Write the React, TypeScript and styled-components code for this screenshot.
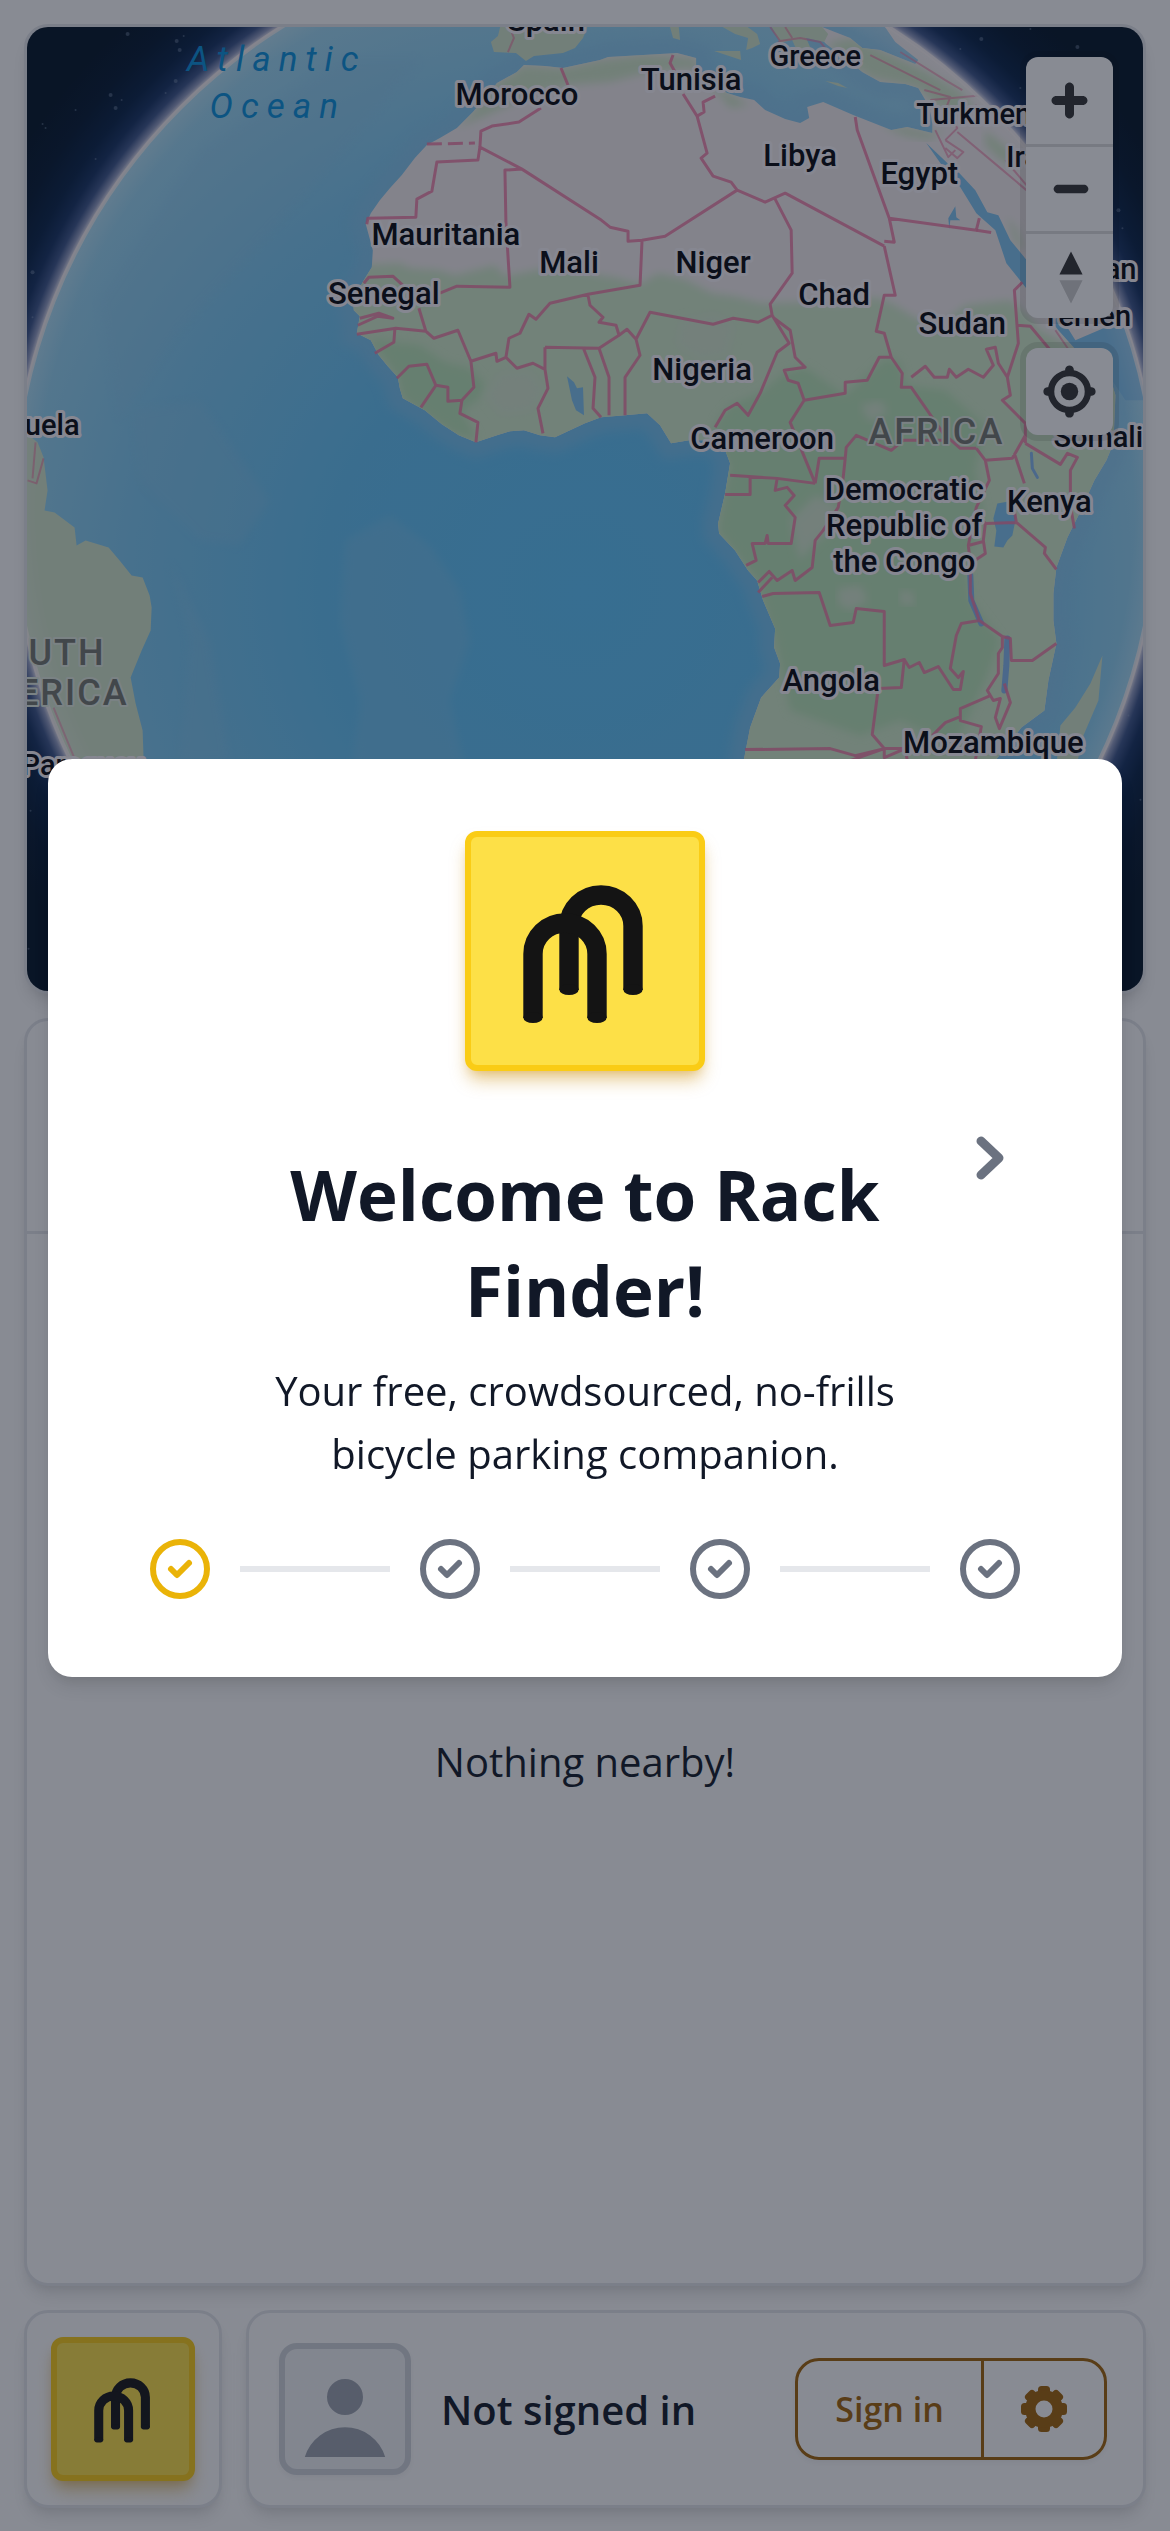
import React from "react";
import styled, { createGlobalStyle, css } from "styled-components";

const GlobalStyle = createGlobalStyle`
  *, *::before, *::after { box-sizing: border-box; }
  body {
    margin: 0;
    background: #ffffff;
    color: #111827;
    font-family: "Segoe UI", "Open Sans", "Noto Sans", sans-serif;
    font-size: 40px;
    line-height: 63px;
  }
  button { font: inherit; color: inherit; cursor: pointer; }
  h1, p { margin: 0; }
`;

const shadowMd = "0 12px 18px -3px rgba(0, 0, 0, 0.1), 0 6px 12px -6px rgba(0, 0, 0, 0.1)";

const Page = styled.div`
  display: grid;
  grid-template-rows: minmax(0, 13fr) minmax(0, 17fr) auto;
  gap: 24px;
  height: 100vh;
  padding: 24px 24px 23px;
`;

const cardStyles = css`
  border: 3px solid #e5e7eb;
  border-radius: 24px;
  background: #ffffff;
  box-shadow: ${shadowMd};
`;

const MapCard = styled.section`
  ${cardStyles}
  position: relative;
  overflow: hidden;
`;

const MapCanvas = styled.svg`
  position: absolute;
  inset: 0;
  width: 100%;
  height: 100%;
`;

const MapControls = styled.div`
  position: absolute;
  top: 30px;
  right: 30px;
  display: flex;
  flex-direction: column;
  gap: 30px;
`;

const ControlGroup = styled.div`
  display: flex;
  flex-direction: column;
  overflow: hidden;
  border-radius: 12px;
  background: #ffffff;
  box-shadow: 0 0 0 6px rgba(0, 0, 0, 0.1);
`;

const ControlButton = styled.button`
  display: flex;
  align-items: center;
  justify-content: flex-end;
  width: 87px;
  height: 87px;
  padding: 0;
  border: 0;
  background: transparent;
  & + & { border-top: 3px solid #dddddd; }
  svg { display: block; height: 100%; }
`;

const ListCard = styled.section`
  ${cardStyles}
  display: flex;
  flex-direction: column;
`;

const ListHeader = styled.header`
  flex: none;
  height: 213px;
  border-bottom: 3px solid #e5e7eb;
`;

const ListBody = styled.div`
  flex: 1;
  display: flex;
  align-items: center;
  justify-content: center;
  padding-top: 6px;
`;

const Footer = styled.footer`
  display: flex;
  gap: 24px;
`;

const LogoCard = styled.div`
  ${cardStyles}
  padding: 24px;
`;

const LogoTile = styled.div<{ $size: number }>`
  flex: none;
  width: ${(p) => p.$size}px;
  height: ${(p) => p.$size}px;
  padding: 24px;
  border: 6px solid #facc15;
  border-radius: 12px;
  background: #fde047;
  box-shadow: 0 12px 18px -3px rgba(202, 138, 4, 0.4), 0 6px 12px -6px rgba(202, 138, 4, 0.4);
  svg { display: block; width: 100%; height: 100%; }
`;

const AccountCard = styled.div`
  ${cardStyles}
  flex: 1;
  display: flex;
  align-items: center;
  gap: 30px;
  padding: 0 36px 0 30px;
`;

const Avatar = styled.div`
  width: 132px;
  height: 132px;
  border: 6px solid #d1d5db;
  border-radius: 18px;
  background: #f3f4f6;
  box-shadow: 0 3px 6px rgba(0, 0, 0, 0.05);
  svg { display: block; width: 100%; height: 100%; }
`;

const AccountName = styled.p`
  flex: 1;
  font-weight: 600;
`;

const ButtonGroup = styled.div`
  display: flex;
  height: 102px;
  border: 3px solid #a16207;
  border-radius: 24px;
  color: #a16207;
  font-size: 34px;
  font-weight: 600;
  box-shadow: 0 3px 6px rgba(0, 0, 0, 0.05);
`;

const GroupButton = styled.button<{ $width: number }>`
  display: flex;
  align-items: center;
  justify-content: center;
  width: ${(p) => p.$width}px;
  padding: 0;
  border: 0;
  background: transparent;
  & + & { border-left: 3px solid #a16207; }
`;

const Backdrop = styled.div`
  position: fixed;
  inset: 0;
  display: flex;
  align-items: center;
  padding: 0 48px 95px;
  background: rgba(17, 24, 39, 0.5);
`;

const Dialog = styled.div`
  flex: 1;
  display: flex;
  flex-direction: column;
  gap: 48px;
  padding: 72px;
  border-radius: 24px;
  background: #ffffff;
  box-shadow: ${shadowMd};
`;

const Slide = styled.div`
  display: grid;
  grid-template-columns: 120px 1fr 120px;
`;

const SlideContent = styled.div`
  grid-column: 2;
  display: flex;
  flex-direction: column;
  align-items: center;
  text-align: center;
`;

const Title = styled.h1`
  margin: 75px 0 21px;
  font-size: 69px;
  font-weight: 700;
  line-height: 96px;
`;

const NextButton = styled.button`
  display: flex;
  align-items: center;
  justify-content: center;
  padding: 0;
  border: 0;
  background: transparent;
  color: #6b7280;
`;

const Stepper = styled.ol`
  display: flex;
  align-items: center;
  gap: 24px;
  margin: 0;
  padding: 0 24px;
  list-style: none;
`;

const Step = styled.li<{ $active: boolean }>`
  flex: none;
  height: 72px;
  color: ${(p) => (p.$active ? "#eab308" : "#6b7280")};
  svg { display: block; }
`;

const StepLine = styled.li`
  flex: 1;
  height: 6px;
  background: #e5e7eb;
`;

/* Two overlapping bicycle hoops */
const Hoop = ({ left, right, shoulder, foot }: { left: number; right: number; shoulder: number; foot: number }) => (
  <>
    <path
      d={`M${left} ${foot - 5}V${shoulder}A32 31 0 0 1 ${right} ${shoulder}V${foot - 5}`}
      fill="none"
      stroke="#141414"
      strokeWidth="19.4"
    />
    <ellipse cx={left} cy={foot - 5.5} rx="9.7" ry="5.5" fill="#141414" />
    <ellipse cx={right} cy={foot - 5.5} rx="9.7" ry="5.5" fill="#141414" />
  </>
);

const Logo = ({ size }: { size: number }) => (
  <LogoTile $size={size}>
    <svg viewBox="0 0 180 180" role="img" aria-label="Rack Finder">
      <Hoop left={74} right={138} shoulder={65} foot={134} />
      <Hoop left={38} right={102} shoulder={93} foot={162} />
    </svg>
  </LogoTile>
);

const Gear = () => (
  <svg width="48" height="48" viewBox="-24 -24 48 48" aria-hidden="true">
    <g fill="currentColor">
      {[0, 45, 90, 135].map((a) => (
        <rect key={a} x="-6" y="-23" width="12" height="46" rx="3.5" transform={`rotate(${a})`} />
      ))}
      <circle r="19" />
    </g>
    <circle r="8.5" fill="#ffffff" />
  </svg>
);

const StepIcon = () => (
  <svg width="72" height="72" viewBox="0 0 24 24" fill="none" stroke="currentColor" strokeWidth="2" strokeLinecap="round" strokeLinejoin="round" aria-hidden="true">
    <path d="M9 12l2 2 4-4m6 2a9 9 0 11-18 0 9 9 0 0118 0z" />
  </svg>
);

const AFRICA_ASIA =
  "M524 65L517 72L497 83L485 98L473 112L457 128L440 138L427 145L415 158L402 175L390 188L380 200L371 213L366 224L373 250L372 267L364 280L353 300L354 310L360 316L357 333L371 340L379 355L388 366L398 377L400 388L403 398L425 410L442 424L459 435L476 442L497 435L510 431L524 430L540 435L555 437L570 430L585 423L601 417L625 415L647 413L660 425L671 443L689 440L712 440L724 447L730 463L725 493L718 523L719 533L735 550L748 570L757 580L763 600L775 628L774 647L780 663L779 677L761 697L750 727L744 758L744 800L985 800L995 760L1021 727L1044 710L1048 680L1056 643L1053 620L1053 593L1056 567L1067 537L1079 513L1094 480L1106 460L1113 443L1115 395L1110 378L1088 352L1075 348L1090 345L1110 330L1150 300L1150 20L880 20L895 42L918 60L915 64L880 50L862 48L850 38L822 27L812 30L826 44L850 62L862 72L880 82L905 84L918 88L928 105L932 120L932 133L907 127L891 130L853 115L823 102L807 107L809 118L800 123L785 119L765 110L754 100L740 97L727 93L712 84L696 67L696 58L677 53L643 55L608 57L600 60L563 68L545 66Z";

const SAVANNA =
  "M340 266L400 263L410 268L440 270L455 275L495 265L505 276L555 266L600 275L615 277L640 284L658 273L685 279L712 293L735 296L761 303L800 302L840 304L876 297L895 305L914 317L940 325L965 305L991 302L1010 300L1022 310L1040 330L1070 345L1120 360L1120 480L1040 820L744 820L735 740L700 500L380 460Z";

const FOREST = [
  "M370 339L395 342L420 345L445 362L470 368L486 385L478 400L462 410L478 440L455 434L403 398L398 377Z",
  "M718 420L730 405L760 393L785 372L805 367L845 395L885 358L900 362L905 385L945 390L985 425L975 470L985 520L965 560L970 600L1000 640L985 680L955 745L900 720L860 735L790 710L775 640L757 580L718 530L730 465L712 436Z",
];

const LIGHT_PATCHES = [
  "M680 320L715 312L735 325L728 355L700 360L676 345Z",
  "M500 372L530 370L545 390L530 412L500 415L485 395Z",
  "M838 588L860 585L868 600L850 610L838 603Z",
  "M900 590L912 592L915 605L900 603Z",
  "M860 405L880 400L888 412L870 422Z",
  "M815 495L838 505L830 530L812 545L800 560L790 520Z",
];

const COAST_GREEN = [
  "M524 65L497 83L473 112L457 128L480 118L510 105L540 92L570 85L610 82L650 72L690 68L720 95L730 108L750 105L727 93L696 67L696 58L643 55L600 60L563 68Z",
  "M880 126L907 127L932 133L945 128L930 140L905 136Z",
  "M850 38L880 50L925 70L960 90L975 110L960 115L935 105L918 88L870 78L826 44Z",
  "M985 130L1010 150L1020 168L1000 160L985 145Z",
  "M1006 216L1016 228L1024 250L1016 245Z",
];

const BORDERS =
  "M561 68L568 85M541 108L519 122L492 126L481 131L480 147L478 160L437 162L432 191L417 199L416 217L368 218L367 224" +
  "M480 147L522 169L600 219L610 227L628 231L628 241L642 240L665 236L737 190L765 202L785 193L884 246" +
  "M522 169L505 170L506 223L510 287L457 286L440 293M364 283L369 277L393 276L404 286M419 308L426 331" +
  "M357 334L396 328L426 331L434 338L458 330L471 361L496 353L497 361L506 357L517 368L533 363L545 369" +
  "M360 318L379 313L393 318L378 316L358 325M395 329L394 342L375 353" +
  "M397 378L409 366L427 364L436 385L421 407M436 385L448 387L448 401L462 400L460 413L478 422L476 442M471 361L474 387L462 400" +
  "M506 357L509 338L520 333L529 314L536 319L550 303L588 294L640 285L642 240" +
  "M588 295L590 305L603 317L599 322L616 325L619 335L627 329L636 339L650 312L713 324L733 318L758 322L772 315L770 304L792 273L791 230L775 199" +
  "M545 347L599 348L619 335M545 347L545 369L548 388L538 408L543 433" +
  "M583 347L595 377L593 408L601 417M599 348L609 377L609 415M636 339L640 355L625 377L625 415" +
  "M772 315L789 343L777 352L760 393L748 415L737 403L725 410L715 427M774 318L790 330L795 357L805 367L784 370L788 380L798 383L804 400L790 422L815 483" +
  "M804 400L845 393L845 382L867 380L879 357L891 357L884 333L876 331L884 295L895 295L884 246" +
  "M855 117L857 130L889 218L894 242L884 241M889 218L976 230L979 218" +
  "M673 55L670 63L675 72M683 94L697 116L707 153L701 158L713 176L731 182L737 190M697 116L704 112L703 102L715 96" +
  "M891 357L902 373L901 387L911 387L943 433L960 448L976 448M911 377L925 366L934 377L947 377L949 369L956 377L968 369L983 377L993 365L986 349L995 347L998 363L1007 377L1010 395L1002 400L1025 423L1025 443" +
  "M1007 377L1018 343L1014 290L1022 282M1017 325L1030 326L1050 350" +
  "M815 483L819 458L845 458L846 447L856 435L891 450L903 440L943 440M845 458L843 477L838 507L823 530L815 540L812 567L795 580L792 570L777 580L769 571L758 582" +
  "M730 475L777 478L815 483M750 477L750 494L725 494M777 478L775 490L787 487L794 495L785 505L795 517L791 543L768 543L767 535L765 543L752 543L756 560L746 565M758 592L772 577" +
  "M762 596L773 593L819 592L830 625L853 622L856 608L884 611L884 665L904 659L901 687L878 688L872 734L884 748L905 748" +
  "M745 749L830 748L855 755L884 748L850 760M884 748L884 757L905 748L907 760" +
  "M904 659L909 667L919 662L924 672L938 666L953 689L960 689L963 671L958 677L950 668L956 635L961 623L979 620L1002 636L1010 638L1011 660L1032 660L1056 643" +
  "M979 620L970 593L970 563L985 553L983 540L985 523L982 520M968 545L983 541M970 563L968 545L976 507L989 480L985 460L976 448M985 460L1012 458L1025 435M1014 453L1024 483" +
  "M985 523L1016 522L1045 547L1044 553L1056 569M1016 522L1014 510M1025 443L1060 464L1067 453L1077 457L1070 470L1070 505L1074 528" +
  "M1002 636L1002 647L998 653L998 673L987 690L993 700L1000 698L995 717L999 728L1010 702L1004 683M990 695L960 708L960 720L981 726L975 760M960 716L945 722L932 735";

const FINE_BORDERS =
  "M36 442L33 478M28 480L37 483L44 458M54 707L75 758" +
  "M770 27L780 41L800 38L820 42L825 48M780 41L774 46M785 27L792 38M924 90L950 97L945 110L957 128L945 140M935 130L948 157L955 150M945 140L963 152L957 158L945 148M957 132L1000 168L1026 190M870 55L900 70L940 90M900 52L945 80L962 90M930 100L985 95L1010 130M1005 160L1026 185M975 105L990 120" +
  "M1055 330L1070 352M510 28L514 38L508 52";

type Label = { t: string; x: number; y: number; s?: number; a?: "start" | "middle" | "end" };

const LABELS: Label[] = [
  { t: "Spain", x: 546, y: 31 },
  { t: "Morocco", x: 517, y: 105 },
  { t: "Tunisia", x: 691, y: 90 },
  { t: "Greece", x: 815, y: 66, s: 29 },
  { t: "Turkmenistan", x: 916, y: 124, s: 29, a: "start" },
  { t: "Libya", x: 800, y: 166 },
  { t: "Egypt", x: 919, y: 184 },
  { t: "Iran", x: 1006, y: 167, s: 29, a: "start" },
  { t: "Mauritania", x: 446, y: 245 },
  { t: "Mali", x: 569, y: 273 },
  { t: "Niger", x: 713, y: 273 },
  { t: "Senegal", x: 384, y: 304 },
  { t: "Chad", x: 834, y: 305 },
  { t: "Sudan", x: 962, y: 334 },
  { t: "Oman", x: 1136, y: 279, s: 29, a: "end" },
  { t: "Yemen", x: 1086, y: 326, s: 29 },
  { t: "Nigeria", x: 702, y: 380 },
  { t: "Cameroon", x: 762, y: 449 },
  { t: "Democratic", x: 904, y: 500 },
  { t: "Republic of", x: 904, y: 536 },
  { t: "the Congo", x: 904, y: 572 },
  { t: "Kenya", x: 1049, y: 512 },
  { t: "Somalia", x: 1053, y: 447, s: 29, a: "start" },
  { t: "Angola", x: 831, y: 690 },
  { t: "Mozambique", x: 993, y: 752 },
  { t: "Venezuela", x: 80, y: 435, s: 29, a: "end" },
  { t: "Paraguay", x: 22, y: 774, s: 29, a: "start" },
];

const STARS = [
  [128, 34, 2], [177, 41, 2], [184, 36, 1], [180, 50, 2], [176, 81, 2], [111, 95, 2], [122, 100, 1], [116, 108, 2], [166, 93, 1],
  [76, 110, 1], [43, 124, 1], [46, 128, 1], [96, 159, 1], [33, 272, 2], [33, 317, 1], [981, 39, 2], [1077, 47, 2], [1030, 29, 1],
  [960, 49, 1], [1118, 210, 2], [1122, 228, 1], [1020, 88, 1], [1128, 715, 1], [1140, 799, 1], [31, 810, 1], [29, 948, 1],
];

const GlobeMap = () => (
  <MapCanvas viewBox="27 27 1116 963" preserveAspectRatio="xMidYMid slice" role="img" aria-label="Map centred on Africa">
    <defs>
      <radialGradient id="space" gradientUnits="userSpaceOnUse" cx="585" cy="511" r="700">
        <stop offset="0.817" stopColor="#e6e4ee" />
        <stop offset="0.823" stopColor="#929dc2" />
        <stop offset="0.834" stopColor="#3b5488" />
        <stop offset="0.85" stopColor="#14305f" />
        <stop offset="0.872" stopColor="#062044" />
        <stop offset="0.91" stopColor="#02162f" />
        <stop offset="0.96" stopColor="#011224" />
      </radialGradient>
      <radialGradient id="ocean" gradientUnits="userSpaceOnUse" cx="580" cy="590" r="640">
        <stop offset="0" stopColor="#5cc4fa" />
        <stop offset="0.4" stopColor="#62c3f5" />
        <stop offset="0.7" stopColor="#7ccaf2" />
        <stop offset="1" stopColor="#a3dbf4" />
      </radialGradient>
      <radialGradient id="haze" gradientUnits="userSpaceOnUse" cx="585" cy="511" r="571">
        <stop offset="0.96" stopColor="#ffffff" stopOpacity="0" />
        <stop offset="1" stopColor="#ffffff" stopOpacity="0.2" />
      </radialGradient>
      <clipPath id="globe"><circle cx="585" cy="511" r="571" /></clipPath>
      <clipPath id="land"><path d={AFRICA_ASIA} /></clipPath>
      <filter id="soft"><feGaussianBlur stdDeviation="4" /></filter>
      <filter id="shelf" x="-10%" y="-10%" width="120%" height="120%"><feGaussianBlur stdDeviation="6" /></filter>
    </defs>
    <rect x="-600" y="-600" width="2400" height="2400" fill="url(#space)" />
    {STARS.map(([x, y, r]) => (
      <circle key={`${x}-${y}`} cx={x} cy={y} r={r} fill="#8fa3c0" opacity="0.4" />
    ))}
    <g clipPath="url(#globe)">
      <rect x="0" y="-80" width="1200" height="1200" fill="url(#ocean)" />
      <g filter="url(#soft)" fill="#8cc9ee" opacity="0.3">
        <path d="M345 540L390 515L430 545L460 590L470 640L450 700L470 790L350 790L360 700L340 620Z" />
        <path d="M135 410L200 400L270 500L240 545L200 540L140 480Z" />
        <path d="M100 300L200 150L340 60L420 60L300 200L180 330L120 420Z" />
        <path d="M170 560L190 640L180 760L230 760L210 640Z" />
      </g>
      <path d={AFRICA_ASIA} fill="none" stroke="#8ac6ee" strokeWidth="30" opacity="0.5" filter="url(#shelf)" />
      <path d={AFRICA_ASIA} fill="#f5efef" />
      <g clipPath="url(#land)">
        {COAST_GREEN.map((d) => <path key={d} d={d} fill="#d3e9c9" filter="url(#soft)" />)}
        <path d={SAVANNA} fill="#d2ecca" filter="url(#soft)" />
        {FOREST.map((d) => <path key={d} d={d} fill="#bbe6b8" filter="url(#soft)" />)}
        {LIGHT_PATCHES.map((d) => <path key={d} d={d} fill="#d6e9cf" filter="url(#soft)" />)}
      </g>
      <g fill="#d3e6cb">
        <path d="M502 20L498 36L491 42L494 52L516 53L526 61L534 56L563 53L575 48L583 38L590 20Z" />
        <path d="M668 20L673 38L680 40L678 20ZM710 20L735 34L748 38L746 50L752 48L760 44L757 34L738 20Z" />
        <path d="M714 51L740 51L741 60Z" />
        <path d="M768 20L780 43L792 40L800 58L812 52L806 38L824 42L828 34L816 20Z" />
        <path d="M825 81L838 83L847 88L838 86Z" />
        <path d="M38 442L44 457L48 490L45 510L55 512L75 527L77 545L86 540L109 547L120 560L132 575L143 577L150 595L152 607L151 630L142 650L131 677L136 703L143 730L145 790L10 790L10 420Z" />
        <path d="M1102 655L1098 700L1083 735L1075 770L1056 765L1060 725L1075 707L1090 683Z" />
      </g>
      <g fill="#7fc4f0">
        <path d="M926 143L947 163L958 172L975 190L987 212L998 215L1010 240L1028 262L1050 300L1075 340L1110 325L1150 290L1150 400L1125 400L1105 370L1075 349L1058 330L1022 283L1006 263L995 230L976 213L960 187L940 163Z" />
        <path d="M997 503L1008 501L1016 505L1015 520L1012 535L1007 540L1003 547L994 546L996 530L993 518Z" />
        <path d="M567 376L574 382L577 388L583 387L584 415L576 410L572 400Z" />
        <path d="M955 206L956 217L960 220L950 220L949 229L948 218Z" />
      </g>
      <g fill="none" stroke="#84b8ee" strokeWidth="6" strokeLinecap="round">
        <path d="M970 575L971 600L981 623" />
        <path d="M1007 638L1006 665L1004 690" />
        <path d="M1031 453L1032 468L1037 477" strokeWidth="3" />
      </g>
      <path d={BORDERS} fill="none" stroke="#ee7ba4" strokeWidth="3" strokeLinejoin="round" opacity="0.85" />
      <path d={FINE_BORDERS} fill="none" stroke="#ee7ba4" strokeWidth="2" strokeLinejoin="round" opacity="0.6" />
      <path d="M427 144L475 143M976 230L995 233" fill="none" stroke="#ee7ba4" strokeWidth="3" strokeDasharray="15 6" opacity="0.85" />
      <circle cx="585" cy="511" r="571" fill="url(#haze)" />
    </g>
    <circle cx="585" cy="511" r="571" fill="none" stroke="#fdf6f4" strokeWidth="4" opacity="0.75" />

    <g fontFamily="Roboto, 'Liberation Sans', sans-serif">
      <g fill="#0790dd" fontSize="35" fontStyle="italic" fontWeight="400" letterSpacing="8" textAnchor="middle">
        <text x="277" y="71">Atlantic</text>
        <text x="278" y="118">Ocean</text>
      </g>
      <g fontWeight="500" fill="#04060c" stroke="#fbf7fb" strokeWidth="6" strokeLinejoin="round" paintOrder="stroke">
        {LABELS.map((l) => (
          <text key={l.t} x={l.x} y={l.y} fontSize={l.s ?? 31} textAnchor={l.a ?? "middle"}>{l.t}</text>
        ))}
      </g>
      <g fill="#73766f" stroke="#e3ece1" strokeWidth="4" strokeLinejoin="round" paintOrder="stroke" fontSize="36" fontWeight="500" letterSpacing="2">
        <text x="936" y="444" textAnchor="middle">AFRICA</text>
        <text x="106" y="664" textAnchor="end">SOUTH</text>
        <text x="129" y="704" textAnchor="end">AMERICA</text>
      </g>
    </g>
  </MapCanvas>
);

export default function App() {
  return (
    <>
      <GlobalStyle />
      <Page>
        <MapCard>
          <GlobeMap />
          <MapControls>
            <ControlGroup>
              <ControlButton aria-label="Zoom in">
                <svg viewBox="0 0 29 29" fill="#333333">
                  <path d="M14.5 8.5c-.75 0-1.5.75-1.5 1.5v3h-3c-.75 0-1.5.75-1.5 1.5S9.25 16 10 16h3v3c0 .75.75 1.5 1.5 1.5S16 19.75 16 19v-3h3c.75 0 1.5-.75 1.5-1.5S19.75 13 19 13h-3v-3c0-.75-.75-1.5-1.5-1.5z" />
                </svg>
              </ControlButton>
              <ControlButton aria-label="Zoom out">
                <svg viewBox="0 0 29 29" fill="#333333">
                  <path d="M10 13c-.75 0-1.5.75-1.5 1.5S9.25 16 10 16h9c.75 0 1.5-.75 1.5-1.5S19.75 13 19 13h-9z" />
                </svg>
              </ControlButton>
              <ControlButton aria-label="Reset bearing to north">
                <svg viewBox="0 0 29 29" fill="#333333">
                  <path d="M10.5 14l4-8 4 8h-8z" />
                  <path d="M10.5 16l4 8 4-8h-8z" fill="#cccccc" />
                </svg>
              </ControlButton>
            </ControlGroup>
            <ControlGroup>
              <ControlButton aria-label="Find my location">
                <svg viewBox="0 0 20 20" fill="#333333">
                  <path d="M10 4C9 4 9 5 9 5v.1A5 5 0 005.1 9H5s-1 0-1 1 1 1 1 1h.1A5 5 0 009 14.9v.1s0 1 1 1 1-1 1-1v-.1a5 5 0 003.9-3.9h.1s1 0 1-1-1-1-1-1h-.1A5 5 0 0011 5.1V5s0-1-1-1zm0 2.5a3.5 3.5 0 110 7 3.5 3.5 0 110-7z" />
                  <circle cx="10" cy="10" r="2" />
                </svg>
              </ControlButton>
            </ControlGroup>
          </MapControls>
        </MapCard>

        <ListCard>
          <ListHeader />
          <ListBody>
            <p>Nothing nearby!</p>
          </ListBody>
        </ListCard>

        <Footer>
          <LogoCard>
            <Logo size={144} />
          </LogoCard>
          <AccountCard>
            <Avatar>
              <svg viewBox="0 -2 20 20" fill="#9ca3af" aria-hidden="true">
                <path d="M10 9a3 3 0 100-6 3 3 0 000 6zM3.3 16a7 7 0 0113.4 0z" />
              </svg>
            </Avatar>
            <AccountName>Not signed in</AccountName>
            <ButtonGroup>
              <GroupButton $width={183}>Sign in</GroupButton>
              <GroupButton $width={123} aria-label="Settings">
                <Gear />
              </GroupButton>
            </ButtonGroup>
          </AccountCard>
        </Footer>
      </Page>

      <Backdrop>
        <Dialog role="dialog" aria-modal="true" aria-labelledby="welcome-title">
          <Slide>
            <SlideContent>
              <Logo size={240} />
              <Title id="welcome-title">Welcome to Rack Finder!</Title>
              <p>Your free, crowdsourced, no-frills bicycle parking companion.</p>
            </SlideContent>
            <NextButton aria-label="Next">
              <svg width="72" height="72" viewBox="0 0 72 72" fill="none" stroke="currentColor" strokeWidth="9" strokeLinecap="round" strokeLinejoin="round">
                <path d="M27 19L45 36L27 53" />
              </svg>
            </NextButton>
          </Slide>
          <Stepper>
            {[0, 1, 2, 3].map((i) => (
              <React.Fragment key={i}>
                {i > 0 && <StepLine aria-hidden="true" />}
                <Step $active={i === 0}><StepIcon /></Step>
              </React.Fragment>
            ))}
          </Stepper>
        </Dialog>
      </Backdrop>
    </>
  );
}
